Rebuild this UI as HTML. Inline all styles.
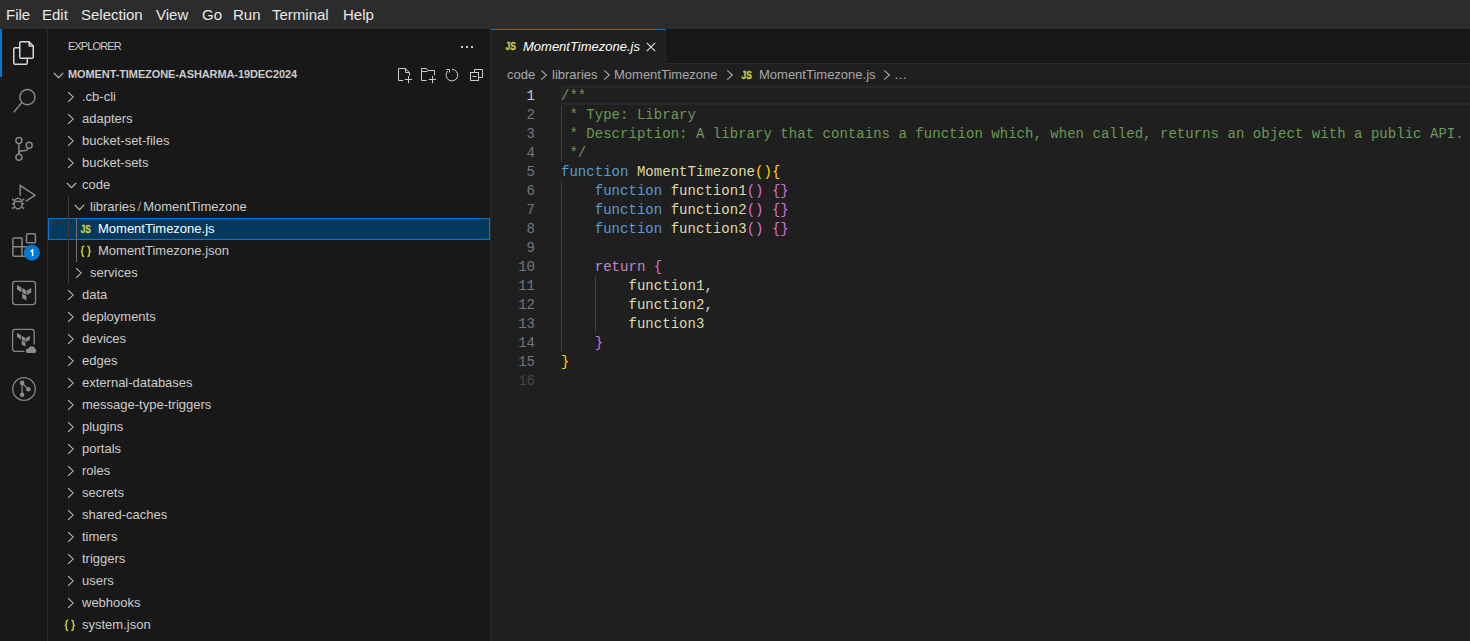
<!DOCTYPE html>
<html><head><meta charset="utf-8">
<style>
*{margin:0;padding:0;box-sizing:border-box}
html,body{width:1470px;height:641px;overflow:hidden;background:#1f1f1f;font-family:"Liberation Sans",sans-serif;position:relative}
.a{position:absolute}
#title{position:absolute;left:0;top:0;width:1470px;height:29px;background:#2c2c2c;}
#title span{position:absolute;top:6px;font-size:15px;color:#e8e8e8;line-height:18px;white-space:nowrap}
#act{position:absolute;left:0;top:29px;width:47px;height:612px;background:#181818;}
#actb{position:absolute;left:47px;top:29px;width:1px;height:612px;background:#2b2b2b}
#side{position:absolute;left:48px;top:29px;width:442px;height:612px;background:#181818;}
#sideb{position:absolute;left:490px;top:29px;width:1px;height:612px;background:#2b2b2b}
.lab{position:absolute;font-size:13px;line-height:22px;color:#cccccc;white-space:nowrap}
.sl{color:#9a9a9a;padding:0 2px}
.sel{position:absolute;left:48px;width:442px;height:22px;background:#04395e;border:1px solid #0078d4}
.sel-t{color:#ffffff}
.g{position:absolute;width:1px;background:#3c3c3c}
.ga{background:#707070}
.jsi{position:absolute;font-size:9.5px;font-weight:bold;line-height:22px;color:#cbcb41;letter-spacing:-0.3px}
.jsoni{position:absolute;font-size:12px;font-weight:bold;line-height:22px;color:#cbcb41;}
#tabs{position:absolute;left:491px;top:29px;width:979px;height:35px;background:#181818;border-bottom:1px solid #2b2b2b}
#tab{position:absolute;left:491px;top:29px;width:175px;height:35px;background:#1f1f1f;border-top:1px solid #0078d4;border-right:1px solid #2b2b2b}
.crumb{position:absolute;top:64px;font-size:13px;line-height:22px;color:#a9a9a9;white-space:nowrap}
.ln{position:absolute;left:491px;width:44px;text-align:right;font-family:"Liberation Mono",monospace;font-size:14px;color:#6e7681;line-height:19px;height:19px}
.ln.act{color:#cccccc}.ln.dim{color:#45484c}
.cl{position:absolute;left:561px;letter-spacing:0.035px;font-family:"Liberation Mono",monospace;font-size:14px;color:#d4d4d4;line-height:19px;height:19px;white-space:pre}
.c{color:#6a9955}.k{color:#569cd6}.f{color:#dcdcaa}.r{color:#c586c0}.b1{color:#ffd700}.b2{color:#da70d6}
.eg{position:absolute;width:1px;background:#404040}
#curline{position:absolute;left:561px;top:86px;width:909px;height:19px;border:2px solid #282828;border-right:none}
</style></head><body>
<div id="title">
<span style="left:6px">File</span>
<span style="left:42px">Edit</span>
<span style="left:81px">Selection</span>
<span style="left:156px">View</span>
<span style="left:202px">Go</span>
<span style="left:233px">Run</span>
<span style="left:272px">Terminal</span>
<span style="left:343px">Help</span>
</div>
<div id="act"></div>
<div id="actb"></div>
<div id="side"></div>
<div id="sideb"></div>
<div class="a" style="left:0;top:29px;width:2px;height:48px;background:#0078d4"></div>
<svg class="a" style="left:0;top:29px" width="47" height="400" viewBox="0 29 47 400">
 <g fill="none" stroke="#d7d7d7" stroke-width="1.5" stroke-linejoin="round">
  <path d="M19.75 47.75 H15 Q13.75 47.75 13.75 49 V63 Q13.75 64.25 15 64.25 H26 Q27.25 64.25 27.25 63 V58.25"/>
  <path d="M21 41.75 H29 L33.25 46 V57 Q33.25 58.25 32 58.25 H21 Q19.75 58.25 19.75 57 V43 Q19.75 41.75 21 41.75 Z"/>
  <path d="M29.25 41.75 V46 H33.25"/>
 </g>
 <g fill="none" stroke="#868686" stroke-width="1.5">
  <circle cx="27.4" cy="97.2" r="7.6"/>
  <path d="M21.7 102.7 L13.8 112.2"/>
  <circle cx="18.9" cy="140.5" r="3"/>
  <circle cx="18.9" cy="157.2" r="3"/>
  <circle cx="29.2" cy="145.3" r="3"/>
  <path d="M18.9 143.5 V154.2"/>
  <path d="M28.4 148.2 Q27 150.8 24 150.8 H22 Q18.9 150.8 18.9 154"/>
  <path d="M20.2 195.7 V185.5 L35 195.2 L25.8 201.3"/>
  <ellipse cx="18.1" cy="203.6" rx="4" ry="5.3"/>
  <path d="M14.5 201.6 H21.7 M12 199.2 L14.6 200.5 M24.2 199.2 L21.6 200.5 M12 203.8 H14.2 M24.2 203.8 H22 M12 208.5 L14.6 207.2 M24.2 208.5 L21.6 207.2"/>
  <rect x="26.5" y="233.7" width="8.9" height="9" rx="1.3"/>
  <path d="M22 246.8 V238 Q22 237.9 21 237.9 H14 Q12.9 237.9 12.9 239 V255 Q12.9 256.2 14 256.2 H27 M12.9 246.8 H27 M22 246.8 V256"/>
 </g>
 <circle cx="31.9" cy="252.7" r="8" fill="#0078d4"/>
 <path d="M30.6 251.6 L32.6 250.1 V256.1" fill="none" stroke="#ffffff" stroke-width="1.5"/>
 <g fill="none" stroke="#868686" stroke-width="1.3">
  <rect x="12.6" y="281.4" width="22.9" height="23.2" rx="2.8"/>
  <path d="M12.6 349 V332 Q12.6 329.4 15.2 329.4 H31.6 Q34.2 329.4 34.2 332 V344.5 M24.5 351.3 H15.2 Q12.6 351.3 12.6 348.7"/>
  <circle cx="24" cy="389" r="11.3"/>
  <path d="M22.1 383 V395 M22.1 383 L28.4 389.3"/>
 </g>
 <g fill="#8c8c8c">
  <path d="M17 285 L21.5 287.6 V292.2 L17 289.6 Z"/>
  <path d="M22.2 288 L26.4 290.5 V295.1 L22.2 292.6 Z"/>
  <path d="M27.1 290.5 L31.2 288 V292.6 L27.1 295.1 Z"/>
  <path d="M22.2 293.4 L26.4 295.9 V300.6 L22.2 298.1 Z"/>
  <path d="M17 333 L21 335.3 V339.4 L17 337.1 Z"/>
  <path d="M21.7 335.7 L25.5 337.9 V342 L21.7 339.8 Z"/>
  <path d="M26.1 337.9 L29.8 335.7 V339.8 L26.1 342 Z"/>
  <path d="M21.7 340.5 L25.5 342.7 V346.8 L21.7 344.6 Z"/>
  <path d="M27.5 353 Q25.8 353 25.8 351 Q25.8 348.6 28.2 348.6 Q29.4 346.2 32 346.3 Q34.8 346.5 35.2 349 Q36.3 349.5 36.3 351 Q36.3 353 34.5 353 Z"/>
  <circle cx="22.1" cy="382.9" r="2.3"/>
  <circle cx="28.4" cy="389.3" r="2.3"/>
  <circle cx="22.1" cy="394.8" r="2.3"/>
 </g>
</svg>

<span class="a" style="left:68px;top:38px;font-size:11px;line-height:16px;color:#cccccc;letter-spacing:-0.9px">EXPLORER</span>
<span class="a" style="left:68px;top:66px;font-size:11px;font-weight:bold;line-height:16px;color:#cccccc;letter-spacing:-0.1px">MOMENT-TIMEZONE-ASHARMA-19DEC2024</span>
<svg class="a" style="left:390px;top:36px" width="100" height="50" viewBox="390 36 100 50">
 <g fill="#cccccc"><rect x="461" y="46" width="2" height="2"/><rect x="466" y="46" width="2" height="2"/><rect x="471" y="46" width="2" height="2"/></g>
 <g fill="none" stroke="#cccccc" stroke-width="1" stroke-linejoin="miter">
  <path d="M403.2 80.5 H398.5 V68.5 H405.3 L409.5 72.7 V75.3 M405.5 68.5 V72.5 H409.5"/>
  <path d="M404.8 79.5 H412 M408.5 76 V83.2"/>
  <path d="M426.6 80.5 H421.5 V68.5 H426.5 L428.2 70.5 H434.5 V75.3 M421.5 71.5 H427.2 L428.2 70.5"/>
  <path d="M428.8 79.5 H436 M432.5 76 V83.2"/>
  <path d="M447.8 71 A5.8 5.8 0 1 0 452 69.3" />
  <path d="M446.5 69.5 H449.5 V72.5"/>
  <path d="M474.5 72.5 V69.5 H482.5 V77.5 H478.5"/>
  <rect x="470.5" y="72.5" width="8" height="8"/>
  <path d="M472.5 76.5 H476.5"/>
 </g>
</svg>

<svg class='a' style='left:67.4px;top:86px' width='10' height='22'><path d='M1.1 6.1 L6.1 11 L1.1 15.9' fill='none' stroke='#c0c0c0' stroke-width='1.05'/></svg><span class='lab' style='left:82px;top:86px'>.cb-cli</span><svg class='a' style='left:67.4px;top:108px' width='10' height='22'><path d='M1.1 6.1 L6.1 11 L1.1 15.9' fill='none' stroke='#c0c0c0' stroke-width='1.05'/></svg><span class='lab' style='left:82px;top:108px'>adapters</span><svg class='a' style='left:67.4px;top:130px' width='10' height='22'><path d='M1.1 6.1 L6.1 11 L1.1 15.9' fill='none' stroke='#c0c0c0' stroke-width='1.05'/></svg><span class='lab' style='left:82px;top:130px'>bucket-set-files</span><svg class='a' style='left:67.4px;top:152px' width='10' height='22'><path d='M1.1 6.1 L6.1 11 L1.1 15.9' fill='none' stroke='#c0c0c0' stroke-width='1.05'/></svg><span class='lab' style='left:82px;top:152px'>bucket-sets</span><svg class='a' style='left:65.5px;top:174px' width='12' height='22'><path d='M0.8 8.8 L5.5 13.6 L10.2 8.8' fill='none' stroke='#c0c0c0' stroke-width='1.1'/></svg><span class='lab' style='left:82px;top:174px'>code</span><svg class='a' style='left:73.5px;top:196px' width='12' height='22'><path d='M0.8 8.8 L5.5 13.6 L10.2 8.8' fill='none' stroke='#c0c0c0' stroke-width='1.1'/></svg><span class='lab' style='left:90px;top:196px'>libraries<span class='sl'>/</span>MomentTimezone</span><div class='sel' style='top:218px'></div><svg class='a' style='left:80px;top:218px' width='14' height='22'><text x='0.6' y='15' font-family='Liberation Sans' font-weight='bold' font-size='11' fill='#cbcb41' stroke='#cbcb41' stroke-width='0.35' textLength='10.4' lengthAdjust='spacingAndGlyphs'>JS</text></svg><span class='lab sel-t' style='left:98px;top:218px'>MomentTimezone.js</span><svg class='a' style='left:80px;top:240px' width='14' height='22'><g fill='none' stroke='#cbcb41' stroke-width='1.45'><path d='M4.2 6.3 C2.4 6.3 2.3 7 2.3 8.5 V10 C2.3 11 1.8 11.4 0.8 11.4 C1.8 11.4 2.3 11.8 2.3 12.8 V14.3 C2.3 15.8 2.4 16.5 4.2 16.5'/><path d='M7.4 6.3 C9.2 6.3 9.3 7 9.3 8.5 V10 C9.3 11 9.8 11.4 10.8 11.4 C9.8 11.4 9.3 11.8 9.3 12.8 V14.3 C9.3 15.8 9.2 16.5 7.4 16.5'/></g></svg><span class='lab' style='left:98px;top:240px'>MomentTimezone.json</span><svg class='a' style='left:75.4px;top:262px' width='10' height='22'><path d='M1.1 6.1 L6.1 11 L1.1 15.9' fill='none' stroke='#c0c0c0' stroke-width='1.05'/></svg><span class='lab' style='left:90px;top:262px'>services</span><svg class='a' style='left:67.4px;top:284px' width='10' height='22'><path d='M1.1 6.1 L6.1 11 L1.1 15.9' fill='none' stroke='#c0c0c0' stroke-width='1.05'/></svg><span class='lab' style='left:82px;top:284px'>data</span><svg class='a' style='left:67.4px;top:306px' width='10' height='22'><path d='M1.1 6.1 L6.1 11 L1.1 15.9' fill='none' stroke='#c0c0c0' stroke-width='1.05'/></svg><span class='lab' style='left:82px;top:306px'>deployments</span><svg class='a' style='left:67.4px;top:328px' width='10' height='22'><path d='M1.1 6.1 L6.1 11 L1.1 15.9' fill='none' stroke='#c0c0c0' stroke-width='1.05'/></svg><span class='lab' style='left:82px;top:328px'>devices</span><svg class='a' style='left:67.4px;top:350px' width='10' height='22'><path d='M1.1 6.1 L6.1 11 L1.1 15.9' fill='none' stroke='#c0c0c0' stroke-width='1.05'/></svg><span class='lab' style='left:82px;top:350px'>edges</span><svg class='a' style='left:67.4px;top:372px' width='10' height='22'><path d='M1.1 6.1 L6.1 11 L1.1 15.9' fill='none' stroke='#c0c0c0' stroke-width='1.05'/></svg><span class='lab' style='left:82px;top:372px'>external-databases</span><svg class='a' style='left:67.4px;top:394px' width='10' height='22'><path d='M1.1 6.1 L6.1 11 L1.1 15.9' fill='none' stroke='#c0c0c0' stroke-width='1.05'/></svg><span class='lab' style='left:82px;top:394px'>message-type-triggers</span><svg class='a' style='left:67.4px;top:416px' width='10' height='22'><path d='M1.1 6.1 L6.1 11 L1.1 15.9' fill='none' stroke='#c0c0c0' stroke-width='1.05'/></svg><span class='lab' style='left:82px;top:416px'>plugins</span><svg class='a' style='left:67.4px;top:438px' width='10' height='22'><path d='M1.1 6.1 L6.1 11 L1.1 15.9' fill='none' stroke='#c0c0c0' stroke-width='1.05'/></svg><span class='lab' style='left:82px;top:438px'>portals</span><svg class='a' style='left:67.4px;top:460px' width='10' height='22'><path d='M1.1 6.1 L6.1 11 L1.1 15.9' fill='none' stroke='#c0c0c0' stroke-width='1.05'/></svg><span class='lab' style='left:82px;top:460px'>roles</span><svg class='a' style='left:67.4px;top:482px' width='10' height='22'><path d='M1.1 6.1 L6.1 11 L1.1 15.9' fill='none' stroke='#c0c0c0' stroke-width='1.05'/></svg><span class='lab' style='left:82px;top:482px'>secrets</span><svg class='a' style='left:67.4px;top:504px' width='10' height='22'><path d='M1.1 6.1 L6.1 11 L1.1 15.9' fill='none' stroke='#c0c0c0' stroke-width='1.05'/></svg><span class='lab' style='left:82px;top:504px'>shared-caches</span><svg class='a' style='left:67.4px;top:526px' width='10' height='22'><path d='M1.1 6.1 L6.1 11 L1.1 15.9' fill='none' stroke='#c0c0c0' stroke-width='1.05'/></svg><span class='lab' style='left:82px;top:526px'>timers</span><svg class='a' style='left:67.4px;top:548px' width='10' height='22'><path d='M1.1 6.1 L6.1 11 L1.1 15.9' fill='none' stroke='#c0c0c0' stroke-width='1.05'/></svg><span class='lab' style='left:82px;top:548px'>triggers</span><svg class='a' style='left:67.4px;top:570px' width='10' height='22'><path d='M1.1 6.1 L6.1 11 L1.1 15.9' fill='none' stroke='#c0c0c0' stroke-width='1.05'/></svg><span class='lab' style='left:82px;top:570px'>users</span><svg class='a' style='left:67.4px;top:592px' width='10' height='22'><path d='M1.1 6.1 L6.1 11 L1.1 15.9' fill='none' stroke='#c0c0c0' stroke-width='1.05'/></svg><span class='lab' style='left:82px;top:592px'>webhooks</span><svg class='a' style='left:64px;top:614px' width='14' height='22'><g fill='none' stroke='#cbcb41' stroke-width='1.45'><path d='M4.2 6.3 C2.4 6.3 2.3 7 2.3 8.5 V10 C2.3 11 1.8 11.4 0.8 11.4 C1.8 11.4 2.3 11.8 2.3 12.8 V14.3 C2.3 15.8 2.4 16.5 4.2 16.5'/><path d='M7.4 6.3 C9.2 6.3 9.3 7 9.3 8.5 V10 C9.3 11 9.8 11.4 10.8 11.4 C9.8 11.4 9.3 11.8 9.3 12.8 V14.3 C9.3 15.8 9.2 16.5 7.4 16.5'/></g></svg><span class='lab' style='left:82px;top:614px'>system.json</span><div class='g' style='left:68px;top:196px;height:88px'></div><div class='g ga' style='left:76px;top:218px;height:44px'></div>
<div id="tabs"></div>
<div id="tab"></div>
<svg class='a' style='left:505px;top:35px' width='14' height='22'><text x='0.6' y='15' font-family='Liberation Sans' font-weight='bold' font-size='11' fill='#cbcb41' stroke='#cbcb41' stroke-width='0.35' textLength='10.4' lengthAdjust='spacingAndGlyphs'>JS</text></svg>
<span class="a" style="left:523px;top:36px;font-size:13px;line-height:22px;color:#ffffff;font-style:italic;white-space:nowrap">MomentTimezone.js</span>
<svg class="a" style="left:640px;top:36px" width="22" height="22"><path d="M6.8 6.9 L15.2 15.1 M15.2 6.9 L6.8 15.1" stroke="#d8d8d8" stroke-width="1.25"/></svg>
<span class="crumb" style="left:507px">code</span>
<svg class='a' style='left:540px;top:64px' width='10' height='22'><path d='M1.2 6.3 L6.4 11 L1.2 15.7' fill='none' stroke='#a9a9a9' stroke-width='1.1'/></svg>
<span class="crumb" style="left:552px">libraries</span>
<svg class='a' style='left:603px;top:64px' width='10' height='22'><path d='M1.2 6.3 L6.4 11 L1.2 15.7' fill='none' stroke='#a9a9a9' stroke-width='1.1'/></svg>
<span class="crumb" style="left:614px">MomentTimezone</span>
<svg class='a' style='left:726px;top:64px' width='10' height='22'><path d='M1.2 6.3 L6.4 11 L1.2 15.7' fill='none' stroke='#a9a9a9' stroke-width='1.1'/></svg>
<svg class='a' style='left:741px;top:64px' width='14' height='22'><text x='0.6' y='15' font-family='Liberation Sans' font-weight='bold' font-size='11' fill='#cbcb41' stroke='#cbcb41' stroke-width='0.35' textLength='10.4' lengthAdjust='spacingAndGlyphs'>JS</text></svg>
<span class="crumb" style="left:759px">MomentTimezone.js</span>
<svg class='a' style='left:883px;top:64px' width='10' height='22'><path d='M1.2 6.3 L6.4 11 L1.2 15.7' fill='none' stroke='#a9a9a9' stroke-width='1.1'/></svg>
<span class="crumb" style="left:894px">…</span>
<svg class='a' style='left:52.5px;top:64px' width='12' height='22'><path d='M0.8 8.8 L5.5 13.6 L10.2 8.8' fill='none' stroke='#c0c0c0' stroke-width='1.1'/></svg>
<div id='curline'></div><div class='ln act' style='top:87px'>1</div><div class='cl' style='top:87px'><span class='c'>/**</span></div><div class='ln' style='top:106px'>2</div><div class='cl' style='top:106px'><span class='c'> * Type: Library</span></div><div class='ln' style='top:125px'>3</div><div class='cl' style='top:125px'><span class='c'> * Description: A library that contains a function which, when called, returns an object with a public API.</span></div><div class='ln' style='top:144px'>4</div><div class='cl' style='top:144px'><span class='c'> */</span></div><div class='ln' style='top:163px'>5</div><div class='cl' style='top:163px'><span class='k'>function</span> <span class='f'>MomentTimezone</span><span class='b1'>(){</span></div><div class='ln' style='top:182px'>6</div><div class='cl' style='top:182px'>    <span class='k'>function</span> <span class='f'>function1</span><span class='b2'>()</span> <span class='b2'>{}</span></div><div class='ln' style='top:201px'>7</div><div class='cl' style='top:201px'>    <span class='k'>function</span> <span class='f'>function2</span><span class='b2'>()</span> <span class='b2'>{}</span></div><div class='ln' style='top:220px'>8</div><div class='cl' style='top:220px'>    <span class='k'>function</span> <span class='f'>function3</span><span class='b2'>()</span> <span class='b2'>{}</span></div><div class='ln' style='top:239px'>9</div><div class='cl' style='top:239px'></div><div class='ln' style='top:258px'>10</div><div class='cl' style='top:258px'>    <span class='r'>return</span> <span class='b2'>{</span></div><div class='ln' style='top:277px'>11</div><div class='cl' style='top:277px'>        <span class='f'>function1</span>,</div><div class='ln' style='top:296px'>12</div><div class='cl' style='top:296px'>        <span class='f'>function2</span>,</div><div class='ln' style='top:315px'>13</div><div class='cl' style='top:315px'>        <span class='f'>function3</span></div><div class='ln' style='top:334px'>14</div><div class='cl' style='top:334px'>    <span class='b2'>}</span></div><div class='ln' style='top:353px'>15</div><div class='cl' style='top:353px'><span class='b1'>}</span></div><div class='ln dim' style='top:372px'>16</div><div class='cl' style='top:372px'></div><div class='eg' style='left:561px;top:105px;height:57px'></div><div class='eg' style='left:561px;top:181px;height:171px'></div><div class='eg' style='left:595px;top:276px;height:57px'></div>
</body></html>
